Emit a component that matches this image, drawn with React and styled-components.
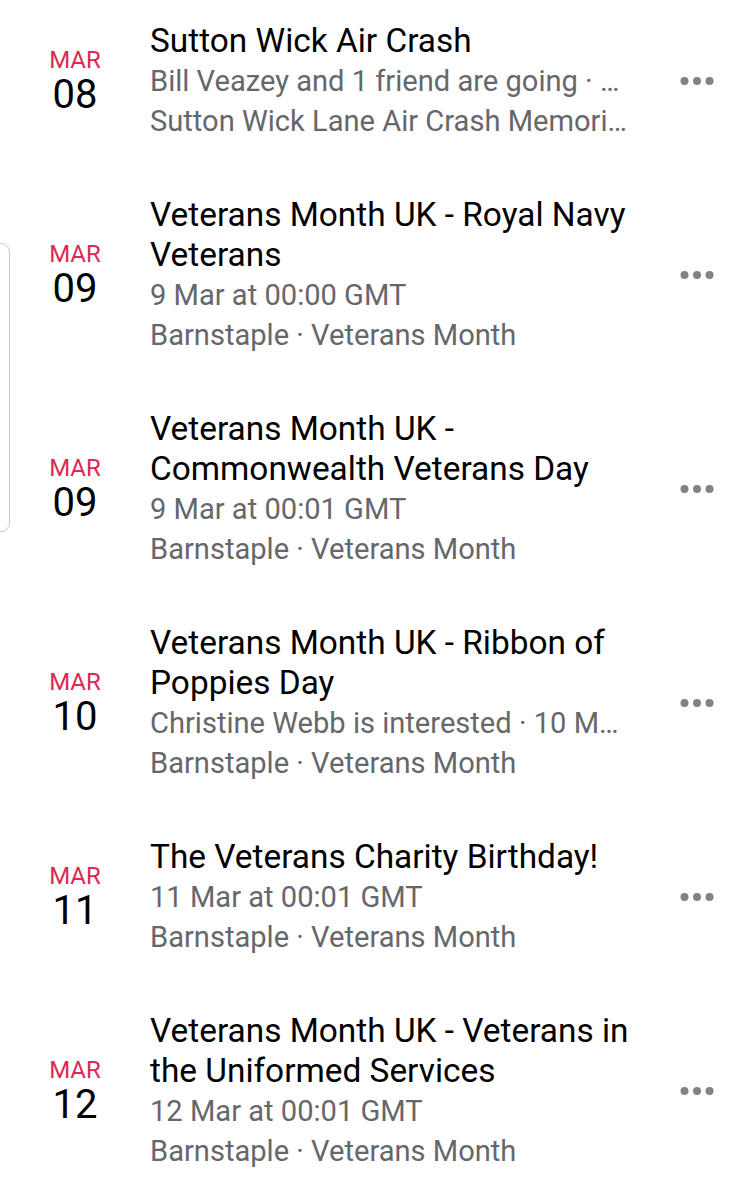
import React from "react";
import styled, { createGlobalStyle } from "styled-components";

const Global = createGlobalStyle`
  html, body { margin: 0; padding: 0; background: #ffffff; }
  body { font-family: Roboto, "Noto Sans", "Liberation Sans", sans-serif; -webkit-font-smoothing: antialiased; }
`;

const Page = styled.div`
  position: relative;
  width: 750px;
  height: 1200px;
  overflow: hidden;
  background: #ffffff;
`;

const List = styled.ul`
  list-style: none;
  margin: 0;
  padding: 21px 0 0 0;
  display: flex;
  flex-direction: column;
  gap: 54px;
`;

const Row = styled.li`
  display: flex;
  align-items: center;
`;

const DateCol = styled.div`
  width: 150px;
  flex: none;
  display: flex;
  flex-direction: column;
  align-items: center;
`;

const Month = styled.span`
  font-size: 24px;
  line-height: 28px;
  color: #dc2a52;
`;

const Day = styled.span`
  font-size: 40px;
  line-height: 42px;
  color: #000000;
`;

const Body = styled.div`
  width: 486px;
  flex: none;
  min-width: 0;
  display: flex;
  flex-direction: column;
`;

const Title = styled.div`
  font-size: 33.4px;
  line-height: 40px;
  color: #000000;
`;

const Meta = styled.div`
  font-size: 29.1px;
  line-height: 40px;
  color: #65676b;
  padding-right: 8px;
  white-space: nowrap;
  overflow: hidden;
  text-overflow: ellipsis;
`;

const MoreButton = styled.button`
  flex: 1;
  display: flex;
  justify-content: center;
  align-items: center;
  background: none;
  border: none;
  padding: 0 0 0 8px;
  margin: 0;
  height: 40px;
  cursor: pointer;
`;

const ScrollHandle = styled.div`
  position: absolute;
  left: -20px;
  top: 243px;
  width: 28px;
  height: 287px;
  border: 1.5px solid #c9c9c9;
  border-radius: 9px;
  background: #ffffff;
  pointer-events: none;
`;

const Dots = () => (
  <svg width="34" height="10" viewBox="0 0 34 10" aria-hidden="true">
    <circle cx="4.5" cy="5" r="4" fill="#808286" />
    <circle cx="17" cy="5" r="4" fill="#808286" />
    <circle cx="29.5" cy="5" r="4" fill="#808286" />
  </svg>
);

const events = [
  {
    day: "08",
    title: "Sutton Wick Air Crash",
    meta: ["Bill Veazey and 1 friend are going ·\u00a08 Mar at 11:00 GMT", "Sutton Wick Lane Air Crash Memorial, Drayton"],
  },
  {
    day: "09",
    title: "Veterans Month UK - Royal Navy Veterans",
    meta: ["9 Mar at 00:00 GMT", "Barnstaple · Veterans Month"],
  },
  {
    day: "09",
    title: "Veterans Month UK - Commonwealth Veterans Day",
    meta: ["9 Mar at 00:01 GMT", "Barnstaple · Veterans Month"],
  },
  {
    day: "10",
    title: "Veterans Month UK - Ribbon of Poppies Day",
    meta: ["Christine Webb is interested · 10 Mar at 00:01 GMT", "Barnstaple · Veterans Month"],
  },
  {
    day: "11",
    title: "The Veterans Charity Birthday!",
    meta: ["11 Mar at 00:01 GMT", "Barnstaple · Veterans Month"],
  },
  {
    day: "12",
    title: "Veterans Month UK - Veterans in the Uniformed Services",
    meta: ["12 Mar at 00:01 GMT", "Barnstaple · Veterans Month"],
  },
];

export default function App() {
  return (
    <Page>
      <Global />
      <List>
        {events.map((e, i) => (
          <Row key={i}>
            <DateCol>
              <Month>MAR</Month>
              <Day>{e.day}</Day>
            </DateCol>
            <Body>
              <Title>{e.title}</Title>
              {e.meta.map((m, j) => (
                <Meta key={j}>{m}</Meta>
              ))}
            </Body>
            <MoreButton aria-label="More">
              <Dots />
            </MoreButton>
          </Row>
        ))}
      </List>
      <ScrollHandle />
    </Page>
  );
}
